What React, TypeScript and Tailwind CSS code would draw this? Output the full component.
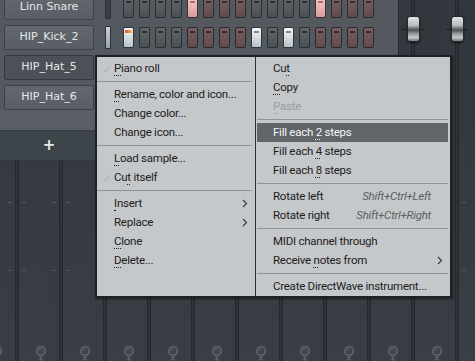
import React from 'react';

type StepState = 'off' | 'pink' | 'white' | 'first';

interface Channel {
  name: string;
  lit: Record<number, StepState>;
  on?: boolean;
  selected?: boolean;
}

const channels: Channel[] = [
  { name: 'Linn Snare', lit: { 5: 'pink', 13: 'pink' } },
  { name: 'HIP_Kick_2', lit: { 1: 'first', 9: 'white', 11: 'white' }, on: true },
  { name: 'HIP_Hat_5', lit: {}, selected: true },
  { name: 'HIP_Hat_6', lit: {} },
];

const Step = ({ index, state }: { index: number; state: StepState }) => {
  const red = Math.floor((index - 1) / 4) % 2 === 1;
  let cls = red
    ? 'bg-linear-to-b from-[#7a5f5f] to-[#614b4b] border-[#2c2a2b]'
    : 'bg-linear-to-b from-[#62676b] to-[#4a4f53] border-[#2a2e31]';
  if (state === 'pink') cls = 'bg-linear-to-b from-[#f6cccb] to-[#d99a99] border-[#3a3031]';
  if (state === 'white' || state === 'first') cls = 'bg-linear-to-b from-[#f3f7f9] to-[#b7c3ca] border-[#2f3437]';
  return (
    <div className={`w-[11px] h-[21px] shrink-0 rounded-[2px] border flex flex-col items-center ${cls}`}>
      {state === 'first' ? (
        <div className="mt-[2px] w-[7px] h-[3px] bg-linear-to-r from-[#e4472f] to-[#f2c23b]" />
      ) : (
        <div className={`mt-[3px] w-[5px] h-[2px] ${state === 'pink' ? 'bg-[#a86a69]' : state === 'white' ? 'bg-[#7f8a90]' : 'bg-[#2b2f32]'}`} />
      )}
    </div>
  );
};

const ChannelRow = ({ ch }: { ch: Channel }) => (
  <div className="h-[25px] flex items-center">
    <div
      className={`ml-[4px] w-[90px] h-[25px] shrink-0 rounded-[2px] border flex items-center justify-center text-[11px] text-[#e4e8eb] ${
        ch.selected ? 'bg-[#4b5156] border-[#34393d]' : 'bg-linear-to-b from-[#62686e] to-[#585e64] border-[#3d4247]'
      }`}
      style={{ fontFamily: '"DejaVu Sans", sans-serif' }}
    >
      {ch.name}
    </div>
    <div
      className={`ml-[11px] w-[6px] h-[23px] shrink-0 rounded-[1px] border ${
        ch.on ? 'bg-linear-to-b from-[#c9d1d5] to-[#98a3a9] border-[#2e3336]' : 'bg-[#3a3f43] border-[#2b2f33]'
      }`}
    />
    <div className="ml-[12px] flex gap-[5px]">
      {Array.from({ length: 16 }, (_, i) => (
        <Step key={i} index={i + 1} state={ch.lit[i + 1] ?? 'off'} />
      ))}
    </div>
  </div>
);

const PanIcon = () => (
  <svg width="12" height="16" viewBox="0 0 12 16">
    <path d="M6 1.5C3.4 1.5 1.8 3.2 1.8 5.2V8L4 10.2H8L10.2 8V5.2C10.2 3.2 8.6 1.5 6 1.5Z" fill="#40474c" stroke="#646b70" strokeWidth="1.2" />
    <path d="M4.2 5.5C4.2 4.4 5 3.6 6 3.6" fill="none" stroke="#737a7f" strokeWidth="1" />
    <path d="M6 10.2V16M4.3 12.5H7.7M4.3 14.5H7.7" stroke="#5f666b" strokeWidth="1.2" />
  </svg>
);

const MixerStrip = () => (
  <div className="flex h-full w-[44px] shrink-0 bg-linear-to-b from-[#30363b] to-[#393f45]">
    <div className="w-[10px] flex flex-col justify-end items-center">
      <PanIcon />
    </div>
    <div className="w-[13px] bg-[#373d43]/40" />
    <div className="w-[4px] h-full border-x border-[#23282c] bg-[#2d3338] flex flex-col items-center">
      <div className="mt-[16px] h-[26px] flex items-center justify-center">
        <div className="w-[22px] h-px bg-[#1c2023]" />
      </div>
      <div className="mt-[160px] w-[18px] h-px flex justify-between">
        <div className="w-[4px] h-px bg-[#555c61]" />
        <div className="w-[4px] h-px bg-[#555c61]" />
      </div>
      <div className="mt-[67px] w-[18px] h-px flex justify-between">
        <div className="w-[4px] h-px bg-[#50575c]" />
        <div className="w-[4px] h-px bg-[#50575c]" />
      </div>
    </div>
    <div className="w-[17px]" />
  </div>
);

const Fader = () => (
  <div className="w-[13px] h-[26px] rounded-[3px] border border-[#25292c] shadow-[0_1px_2px_rgba(0,0,0,0.6)] bg-[linear-gradient(#dfe2e4_0%,#b8bcbf_35%,#6b7074_48%,#4c5155_55%,#8e9397_68%,#c4c8cb_85%,#74797d_100%)]" />
);

const Check = () => (
  <svg width="9" height="8" viewBox="0 0 9 8">
    <polyline points="1,4.2 3.3,7 8,1" fill="none" stroke="#a7abae" strokeWidth="1" />
  </svg>
);

const Chevron = () => (
  <svg width="6" height="9" viewBox="0 0 6 9">
    <polyline points="1,1 4.5,4.5 1,8" fill="none" stroke="#34383b" strokeWidth="1.1" />
  </svg>
);

interface MenuItemProps {
  label: string;
  acc?: number;
  checked?: boolean;
  disabled?: boolean;
  active?: boolean;
  shortcut?: string;
  sub?: boolean;
}

const MenuItem = ({ label, acc, checked, disabled, active, shortcut, sub }: MenuItemProps) => (
  <div
    className={`h-[19px] ml-[1px] mr-[2px] flex items-center ${
      active ? 'bg-[#5f6569] text-[#f4f6f7]' : disabled ? 'text-[#999da0]' : 'text-[#1e2022]'
    }`}
  >
    <div className="w-[16px] shrink-0 pl-[4px] flex items-center">{checked && <Check />}</div>
    <div className="flex-1 whitespace-nowrap">
      {acc === undefined ? (
        label
      ) : (
        <>
          {label.slice(0, acc)}
          <span className="underline decoration-dotted decoration-1 underline-offset-[3px]">{label[acc]}</span>
          {label.slice(acc + 1)}
        </>
      )}
    </div>
    {shortcut && <div className="pr-[17px] italic text-[#5a5e61] whitespace-nowrap">{shortcut}</div>}
    {sub && (
      <div className="pr-[5px] flex items-center">
        <Chevron />
      </div>
    )}
  </div>
);

const Separator = ({ left }: { left?: boolean }) => (
  <div className={`h-[7px] flex items-center ${left ? 'mr-[3px]' : 'ml-[1px] mr-[2px]'}`}>
    <div className="w-full h-px bg-[#8e9294]" />
  </div>
);

export default function App() {
  return (
    <div className="relative w-[475px] h-[361px] overflow-hidden bg-[#353b41]">
      {/* mixer in the background */}
      <div className="flex h-full -ml-[8px]">
        {Array.from({ length: 12 }, (_, i) => (
          <MixerStrip key={i} />
        ))}
      </div>

      {/* faders visible at top right */}
      <div className="absolute left-[407px] top-[16px]">
        <Fader />
      </div>
      <div className="absolute left-[451px] top-[16px]">
        <Fader />
      </div>

      {/* channel rack window */}
      <div className="absolute left-0 top-0 w-[399px] h-[160px] bg-[#53595e] border-r border-[#24292d] flex flex-col">
        <div className="-mt-[5px] flex flex-col gap-[5px]">
          {channels.map((ch) => (
            <ChannelRow key={ch.name} ch={ch} />
          ))}
        </div>
        <div className="flex-1 bg-[#595f65]" />
        <div className="h-[30px] bg-[#3e454a] border-t border-[#363c41] flex items-center">
          <div className="w-[98px] text-center text-[15px] font-bold leading-none text-[#e6eaed]" style={{ fontFamily: '"DejaVu Sans", sans-serif' }}>
            +
          </div>
        </div>
      </div>

      {/* context menu */}
      <div
        className="absolute left-[95px] top-[55px] w-[357px] h-[243px] border-2 border-[#1d2226] bg-[#c4c8ca] flex text-[11.5px] tracking-[-0.25px] shadow-[1px_1px_2px_rgba(0,0,0,0.5)]"
        style={{ fontFamily: 'Roboto, "Noto Sans", sans-serif' }}
      >
        <div className="w-[158px] pt-[2px] flex flex-col">
          <MenuItem label="Piano roll" acc={0} checked />
          <Separator left />
          <MenuItem label="Rename, color and icon..." acc={0} />
          <MenuItem label="Change color..." />
          <MenuItem label="Change icon..." />
          <Separator left />
          <MenuItem label="Load sample..." acc={0} />
          <MenuItem label="Cut itself" acc={2} checked />
          <Separator left />
          <MenuItem label="Insert" acc={0} sub />
          <MenuItem label="Replace" sub />
          <MenuItem label="Clone" acc={0} />
          <MenuItem label="Delete..." acc={0} />
        </div>
        <div className="w-px bg-[#2b3034]" />
        <div className="flex-1 pt-[2px] flex flex-col">
          <MenuItem label="Cut" acc={2} />
          <MenuItem label="Copy" acc={0} />
          <MenuItem label="Paste" acc={0} disabled />
          <Separator />
          <MenuItem label="Fill each 2 steps" acc={10} active />
          <MenuItem label="Fill each 4 steps" acc={10} />
          <MenuItem label="Fill each 8 steps" acc={10} />
          <Separator />
          <MenuItem label="Rotate left" shortcut="Shift+Ctrl+Left" />
          <MenuItem label="Rotate right" shortcut="Shift+Ctrl+Right" />
          <Separator />
          <MenuItem label="MIDI channel through" />
          <MenuItem label="Receive notes from" acc={8} sub />
          <Separator />
          <MenuItem label="Create DirectWave instrument..." />
        </div>
      </div>
    </div>
  );
}
